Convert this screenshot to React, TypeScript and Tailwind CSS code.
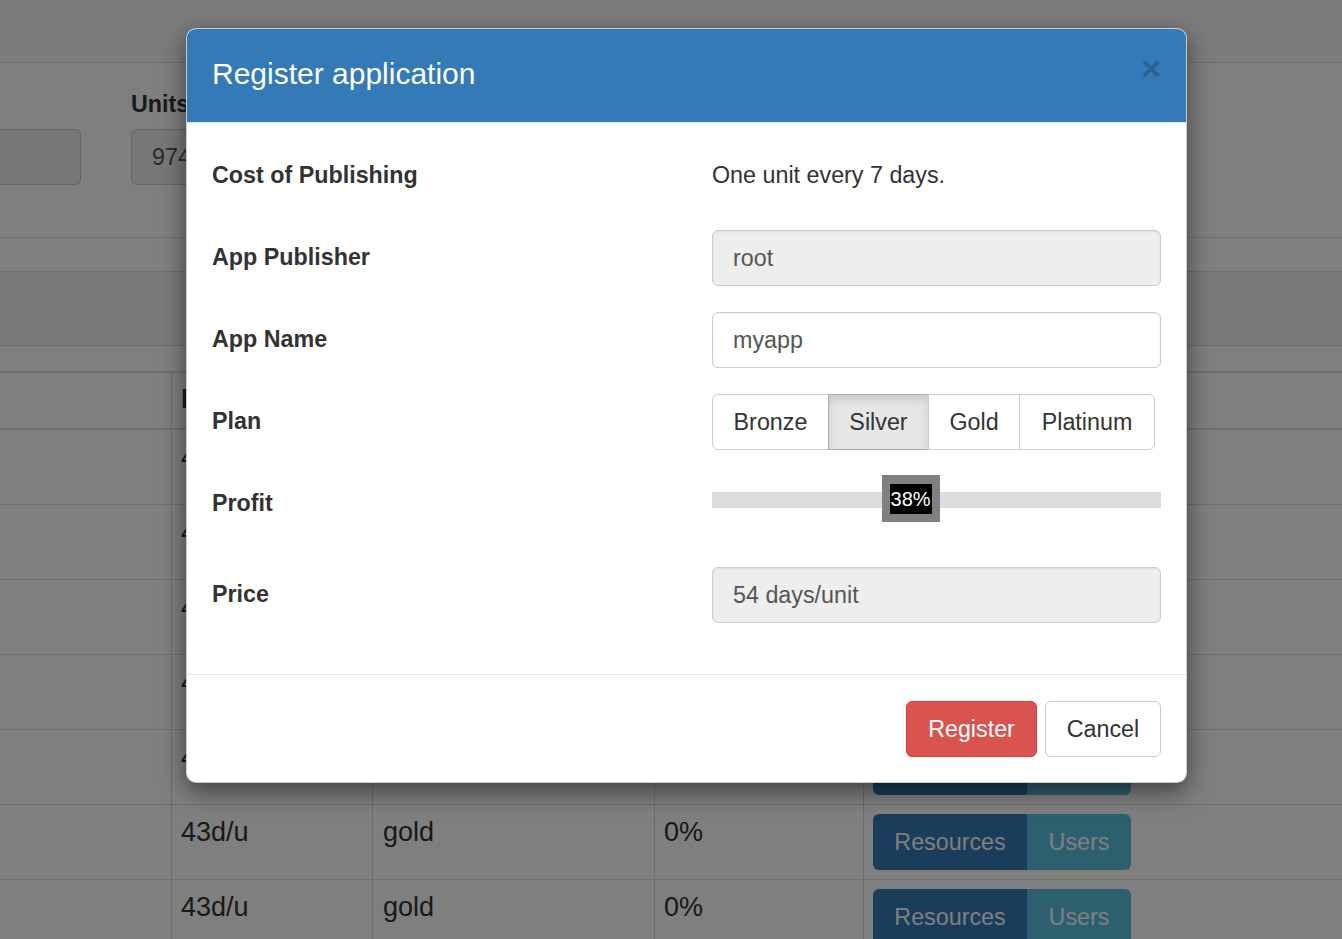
export default function App() {
  const rows = ['', '', '', '', '', '', ''];
  const profit = 38;

  return (
    <div className="relative w-[1342px] h-[939px] overflow-hidden bg-white font-['Liberation_Sans',Arial,sans-serif] text-[23.3px] leading-[32px] text-[#333]">
      {/* Page behind the dialog */}
      <div className="h-[63px] bg-[#f8f8f8] border-b border-[#e2e2e2]" />

      <div className="h-[175px] border-b border-[#dddddd] flex gap-[50px] pt-[25px]">
        <div className="w-[81px] pt-[41px]">
          <div className="h-[56px] bg-[#eeeeee] border border-l-0 border-[#cccccc] rounded-r-[6px]" />
        </div>
        <div>
          <div className="font-bold">Units</div>
          <div className="mt-[9px] h-[56px] w-[200px] bg-[#eeeeee] border border-[#cccccc] rounded-[6px] px-[20px] py-[11px] text-[#555]">
            974
          </div>
        </div>
      </div>
      <div className="h-[34px] border-b border-[#dddddd]" />
      <div className="h-[74px] bg-[#f5f5f5] border-b border-[#dddddd]" />
      <div className="h-[25px]" />

      <div className="border-t-2 border-[#dddddd] text-[27px]">
        <div className="flex h-[57px] border-b-2 border-[#dddddd] font-bold">
          <div className="w-[172px] border-r border-[#dddddd]" />
          <div className="w-[201px] border-r border-[#dddddd] px-[9px] pt-[10px]">Price</div>
          <div className="w-[282px] border-r border-[#dddddd] px-[9px] pt-[10px]">Plan</div>
          <div className="w-[209px] border-r border-[#dddddd] px-[9px] pt-[10px]">Profit</div>
          <div className="flex-1 px-[9px] pt-[10px]">Actions</div>
        </div>
        {rows.map((_, i) => (
          <div key={i} className="flex h-[75px] border-b border-[#dddddd]">
            <div className="w-[172px] border-r border-[#dddddd]" />
            <div className="w-[201px] border-r border-[#dddddd] px-[9px] pt-[11px]">43d/u</div>
            <div className="w-[282px] border-r border-[#dddddd] px-[10px] pt-[11px]">gold</div>
            <div className="w-[209px] border-r border-[#dddddd] px-[9px] pt-[11px]">0%</div>
            <div className="flex-1 px-[9px] pt-[9px] text-[23.3px]">
              <div className="flex h-[56px] text-white">
                <div className="w-[154px] bg-[#337ab7] rounded-l-[6px] flex items-center justify-center">Resources</div>
                <div className="w-[104px] bg-[#5bc0de] rounded-r-[6px] flex items-center justify-center">Users</div>
              </div>
            </div>
          </div>
        ))}
      </div>

      {/* Backdrop */}
      <div className="absolute inset-0 bg-black/50" />

      {/* Dialog */}
      <div className="absolute left-[186px] top-[28px] w-[1001px] bg-white border border-black/20 rounded-[10px] shadow-[0_8px_24px_rgba(0,0,0,0.5)]">
        <div className="h-[94px] bg-[#337ab7] rounded-t-[9px] border-b border-[#e5e5e5] flex items-center justify-between px-[25px]">
          <h4 className="text-[30px] leading-[41px] text-white -mt-[5px]">Register application</h4>
          <span className="text-[34px] font-bold leading-none text-[#29628f] -mt-[16px]">×</span>
        </div>

        <div className="px-[25px] pt-[25px] pb-[51px]">
          <div className="grid grid-cols-[500px_1fr] gap-y-[26px]">
            <div className="font-bold pt-[11px]">Cost of Publishing</div>
            <div className="h-[56px] pt-[11px]">One unit every 7 days.</div>

            <div className="font-bold pt-[11px]">App Publisher</div>
            <div className="h-[56px] bg-[#eeeeee] border border-[#cccccc] rounded-[6px] px-[20px] py-[11px] text-[#555] shadow-[inset_0_1px_2px_rgba(0,0,0,0.075)]">
              root
            </div>

            <div className="font-bold pt-[11px]">App Name</div>
            <div className="h-[56px] bg-white border border-[#cccccc] rounded-[6px] px-[20px] py-[11px] text-[#555] shadow-[inset_0_1px_2px_rgba(0,0,0,0.075)]">
              myapp
            </div>

            <div className="font-bold pt-[11px]">Plan</div>
            <div className="flex h-[56px]">
              <div className="w-[117px] border border-[#cccccc] rounded-l-[6px] flex items-center justify-center">Bronze</div>
              <div className="w-[101px] -ml-px border border-[#adadad] bg-[#e6e6e6] flex items-center justify-center shadow-[inset_0_5px_8px_rgba(0,0,0,0.125)]">Silver</div>
              <div className="w-[92px] -ml-px border border-[#cccccc] flex items-center justify-center">Gold</div>
              <div className="w-[136px] -ml-px border border-[#cccccc] rounded-r-[6px] flex items-center justify-center">Platinum</div>
            </div>

            <div className="font-bold pt-[11px]">Profit</div>
            <div className="h-[65px] pt-[16px]">
              <div className="relative h-[16px] bg-[#dddddd]">
                <div
                  className="absolute -top-[17px] -ml-px h-[47px] w-[58px] bg-[#808080] flex items-center justify-center"
                  style={{ left: `${profit}%` }}
                >
                  <span className="bg-black text-white text-[20px] leading-[30px] w-[42px] text-center">{profit}%</span>
                </div>
              </div>
            </div>

            <div className="font-bold pt-[11px]">Price</div>
            <div className="h-[56px] bg-[#eeeeee] border border-[#cccccc] rounded-[6px] px-[20px] py-[11px] text-[#555] shadow-[inset_0_1px_2px_rgba(0,0,0,0.075)]">
              54 days/unit
            </div>
          </div>
        </div>

        <div className="border-t border-[#e5e5e5] px-[25px] pt-[26px] pb-[25px] flex justify-end gap-[8px]">
          <button className="h-[56px] w-[131px] bg-[#d9534f] border border-[#d43f3a] rounded-[6px] text-white">Register</button>
          <button className="h-[56px] w-[116px] bg-white border border-[#cccccc] rounded-[6px] text-[#333]">Cancel</button>
        </div>
      </div>
    </div>
  );
}
